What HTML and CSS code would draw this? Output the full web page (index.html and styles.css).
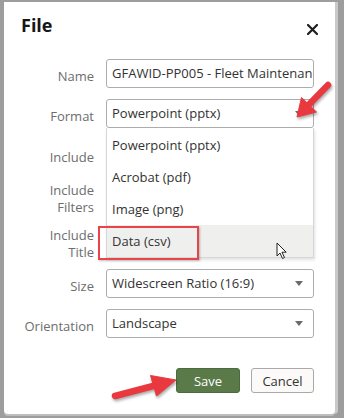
FILE: index.html
```html
<!DOCTYPE html>
<html>
 <head>
  <title>File</title>
  <link rel="stylesheet" href="styles.css">
 </head>
 <body>
  <div class="dialog">
   <div class="header">
    <span class="title">File</span>
    <svg class="close" width="11" height="11" viewBox="0 0 11 11">
     <path d="M1 1 L10 10 M10 1 L1 10" stroke="#1e1e1e" stroke-width="2.2" stroke-linecap="round"/>
    </svg>
   </div>
   <div class="form">
    <div class="row">
     <div class="label">Name</div>
     <div class="field text">GFAWID-PP005 - Fleet Maintenance</div>
    </div>
    <div class="row gap11">
     <div class="label">Format</div>
     <div class="field select"><span>Powerpoint (pptx)</span><span class="caret"></span></div>
    </div>
    <div class="row plain inc1">
     <div class="label">Include</div>
    </div>
    <div class="row plain inc2">
     <div class="label">Include<br/>Filters</div>
    </div>
    <div class="row plain inc3">
     <div class="label">Include<br/>Title</div>
    </div>
    <div class="row size">
     <div class="label">Size</div>
     <div class="field select"><span>Widescreen Ratio (16:9)</span><span class="caret"></span></div>
    </div>
    <div class="row gap11">
     <div class="label">Orientation</div>
     <div class="field select"><span>Landscape</span><span class="caret"></span></div>
    </div>
    <div class="buttons">
     <button class="btn save">Save</button>
     <button class="btn cancel">Cancel</button>
    </div>
   </div>

   <div class="menu">
    <div class="item">Powerpoint (pptx)</div>
    <div class="item">Acrobat (pdf)</div>
    <div class="item">Image (png)</div>
    <div class="item hover">Data (csv)</div>
   </div>
   <div class="callout"></div>
   <svg class="pointer" width="12" height="18" viewBox="0 0 12 18">
    <path d="M1 1 L1 14 L4 11 L6.5 16.5 L8.5 15.5 L6 10.2 L10.2 10.2 Z" fill="#fff" stroke="#222" stroke-width="1" stroke-linejoin="round"/>
   </svg>
  </div>

  <svg class="marks" width="344" height="418" viewBox="0 0 344 418">
   <g fill="#e9393f" stroke="#e9393f">
    <line x1="328" y1="85" x2="309" y2="104.5" stroke-width="6.5" stroke-linecap="round"/>
    <polygon points="297,117 316.5,112 301.5,97.5" stroke-width="1" stroke-linejoin="round"/>
    <line x1="115" y1="396" x2="155" y2="385.5" stroke-width="6.5" stroke-linecap="round"/>
    <polygon points="176,380 156.5,396 150.5,375.5" stroke-width="1" stroke-linejoin="round"/>
   </g>
  </svg>
 </body>
</html>
```

FILE: styles.css
```css
    html, body {
	margin: 0px;
	padding: 0px;
    }

    body {
	position: relative;
	width: 344px;
	height: 418px;
	overflow: hidden;
	background-color: #9d9d9d;
	font-family: "Open Sans", "Liberation Sans", sans-serif;
	font-size: 13px;
	color: #333333;
    }

    div.dialog {
	position: relative;
	margin-top: 2px;
	margin-left: 4px;
	width: 331px;
	height: 412px;
	background-color: #ffffff;
	border-radius: 0px 0px 4px 4px;
	box-shadow: 3px 0px 0px #c9c9c9, 0px 2px 0px #bdbdbd;
    }

    div.header {
	display: flex;
	justify-content: space-between;
	align-items: flex-start;
	height: 57px;
	box-sizing: border-box;
	padding: 11px 17px 0px 17px;
    }

    span.title {
	font-size: 18px;
	font-weight: 700;
	line-height: 24px;
	color: #161616;
    }

    svg.close {
	margin-top: 11px;
    }

    div.form {
	display: flex;
	flex-direction: column;
    }

    div.row {
	display: flex;
	align-items: center;
	column-gap: 12px;
	height: 29px;
    }

    div.row.gap11 {
	margin-top: 11px;
    }

    div.label {
	width: 90px;
	flex: none;
	text-align: right;
	line-height: 17px;
	color: #6d6d6d;
	padding-top: 5px;
	box-sizing: border-box;
    }

    div.row.plain div.label {
	padding-top: 0px;
    }

    div.row.plain {
	align-items: flex-start;
    }

    div.inc1 {
	margin-top: 21px;
	height: 17px;
    }

    div.inc2 {
	margin-top: 16px;
	height: 34px;
    }

    div.inc3 {
	margin-top: 11px;
	height: 34px;
    }

    div.size {
	margin-top: 8px;
    }

    div.field {
	width: 208px;
	height: 29px;
	box-sizing: border-box;
	border: 1px solid #adadad;
	border-radius: 3px;
	padding-left: 5px;
	line-height: 27px;
	white-space: nowrap;
	overflow: hidden;
	color: #333333;
    }

    div.select {
	display: flex;
	justify-content: space-between;
	align-items: center;
    }

    span.caret {
	width: 0px;
	height: 0px;
	margin-right: 10px;
	border-left: 4.5px solid transparent;
	border-right: 4.5px solid transparent;
	border-top: 5px solid #6a6a6a;
    }

    div.buttons {
	display: flex;
	justify-content: flex-end;
	column-gap: 11px;
	margin-top: 30px;
	width: 310px;
    }

    button.btn {
	height: 25px;
	box-sizing: border-box;
	border-radius: 3px;
	font-family: "Open Sans", "Liberation Sans", sans-serif;
	font-size: 13px;
	padding: 0px;
	cursor: pointer;
    }

    button.save {
	width: 64px;
	background-color: #5a7a4a;
	border: 1px solid #4c6a3e;
	color: #ffffff;
    }

    button.cancel {
	width: 63px;
	background-color: #fbfaf8;
	border: 1px solid #a9a9a9;
	color: #333333;
    }

    div.menu {
	position: absolute;
	left: 102px;
	top: 126px;
	width: 208px;
	box-sizing: border-box;
	border: 1px solid #d6d6d6;
	border-top: 0px;
	background-color: #ffffff;
	box-shadow: 1px 2px 3px rgba(0, 0, 0, 0.12);
	padding-top: 1px;
    }

    div.item {
	height: 32px;
	line-height: 32px;
	padding-left: 5px;
	color: #333333;
    }

    div.item.hover {
	background-color: #efefee;
    }

    div.callout {
	position: absolute;
	left: 94px;
	top: 224px;
	width: 101px;
	height: 34px;
	box-sizing: border-box;
	border: 2px solid #e8454b;
	box-shadow: 1px 1px 2px rgba(0, 0, 0, 0.25);
    }

    svg.pointer {
	position: absolute;
	left: 272px;
	top: 240px;
    }

    svg.marks {
	position: absolute;
	left: 0px;
	top: 0px;
	pointer-events: none;
	filter: drop-shadow(1px 2px 1.5px rgba(0, 0, 0, 0.35));
    }
```
